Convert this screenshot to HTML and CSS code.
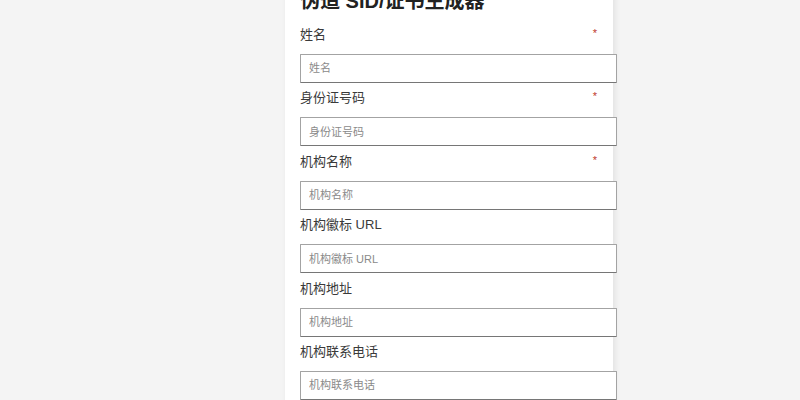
FILE: index.html
```html
<!DOCTYPE html>
<html lang="zh-CN">
<head>
<meta charset="utf-8">
<title>伪造 SID/证书生成器</title>
<link rel="stylesheet" href="styles.css">
</head>
<body>
<div class="card">
  <h2 class="title">伪造 SID/证书生成器</h2>
  <div class="field">
    <div class="label-row"><label class="label">姓名</label><span class="req">*</span></div>
    <input class="input" type="text" placeholder="姓名">
  </div>
  <div class="field">
    <div class="label-row"><label class="label">身份证号码</label><span class="req">*</span></div>
    <input class="input" type="text" placeholder="身份证号码">
  </div>
  <div class="field">
    <div class="label-row"><label class="label">机构名称</label><span class="req">*</span></div>
    <input class="input" type="text" placeholder="机构名称">
  </div>
  <div class="field">
    <div class="label-row"><label class="label">机构徽标 URL</label></div>
    <input class="input" type="text" placeholder="机构徽标 URL">
  </div>
  <div class="field">
    <div class="label-row"><label class="label">机构地址</label></div>
    <input class="input" type="text" placeholder="机构地址">
  </div>
  <div class="field">
    <div class="label-row"><label class="label">机构联系电话</label></div>
    <input class="input" type="text" placeholder="机构联系电话">
  </div>
</div>
</body>
</html>
```
FILE: styles.css
```css
html, body {
  margin: 0;
  padding: 0;
  background: #f4f4f4;
  height: 100%;
  overflow: hidden;
}
body {
  font-family: "Liberation Sans", "Noto Sans CJK SC", sans-serif;
  color: #333;
}
.card {
  width: 298px;
  margin-left: 285px;
  margin-top: -11px;
  padding: 0 15px 20px;
  background: #fff;
  box-shadow: 2px 0 6px rgba(0, 0, 0, 0.08);
}
.title {
  margin: 0 0 6.6px;
  font-size: 20px;
  line-height: 24px;
  font-weight: bold;
  color: #222;
}
.field {
  padding-top: 5.4px;
}
.label-row {
  display: flex;
  justify-content: space-between;
  align-items: flex-start;
  margin-bottom: 9px;
}
.label {
  font-size: 13px;
  line-height: 20px;
  color: #3a3a3a;
}
.req {
  font-size: 11px;
  line-height: 11px;
  color: #c0392b;
  margin-right: 1px;
  margin-top: 3px;
}
.input {
  display: block;
  width: 100%;
  box-sizing: content-box;
  height: 27px;
  padding: 0 9px 0 8px;
  margin: 0;
  border: 1px solid #a3a3a3;
  border-bottom-color: #767676;
  border-radius: 1px;
  background: #fff;
  font-family: "Liberation Sans", "Noto Sans CJK SC", sans-serif;
  font-size: 11px;
  color: #333;
  outline: none;
}
.input::placeholder {
  color: #8a8a8a;
}
```
